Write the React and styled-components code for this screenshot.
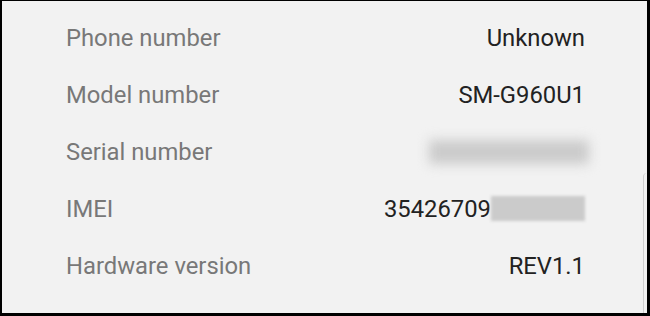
import styled, { createGlobalStyle } from "styled-components";

const GlobalStyle = createGlobalStyle`
  html, body {
    margin: 0;
    padding: 0;
    background: #000;
  }
`;

const Frame = styled.div`
  width: 650px;
  height: 316px;
  box-sizing: border-box;
  border-style: solid;
  border-color: #000;
  border-width: 1px 3px 3px 2px;
  background: #f2f2f2;
  position: relative;
  overflow: hidden;
`;

const List = styled.div`
  display: flex;
  flex-direction: column;
  padding: 8px 62px 0 64px;
`;

const Row = styled.div`
  display: flex;
  align-items: center;
  justify-content: space-between;
  height: 57px;
  font-family: Roboto, "Liberation Sans", sans-serif;
  font-size: 23.8px;
`;

const Label = styled.span`
  color: #787878;
`;

const Value = styled.span`
  color: #222;
  display: flex;
  align-items: center;
`;

const Blur = styled.span`
  display: inline-block;
  width: ${(p) => p.w}px;
  height: ${(p) => p.h}px;
  margin-right: ${(p) => p.shift || 0}px;
  background: #cbcbcb;
  filter: blur(${(p) => p.r}px);
`;

const ScrollEdge = styled.div`
  position: absolute;
  right: 0;
  top: 172px;
  bottom: 0;
  width: 3px;
  border-left: 1px solid #cfcfcf;
  border-top-left-radius: 8px;
`;

const rows = [
  { label: "Phone number", value: "Unknown" },
  { label: "Model number", value: "SM-G960U1" },
  { label: "Serial number", blur: { w: 160, h: 24, r: 6, shift: -4 } },
  { label: "IMEI", value: "35426709", blur: { w: 94, h: 25, r: 1.5 } },
  { label: "Hardware version", value: "REV1.1" },
];

export default function App() {
  return (
    <>
      <GlobalStyle />
      <Frame>
        <List>
          {rows.map((r) => (
            <Row key={r.label}>
              <Label>{r.label}</Label>
              <Value>
                {r.value}
                {r.blur && (
                  <Blur w={r.blur.w} h={r.blur.h} r={r.blur.r} shift={r.blur.shift} />
                )}
              </Value>
            </Row>
          ))}
        </List>
        <ScrollEdge />
      </Frame>
    </>
  );
}
